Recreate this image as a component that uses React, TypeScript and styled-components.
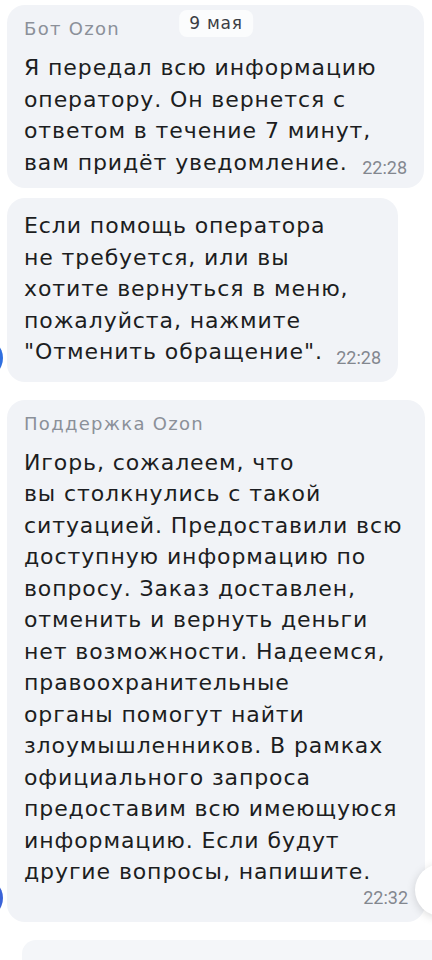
import styled, { createGlobalStyle } from "styled-components";

const GlobalStyle = createGlobalStyle`
  html, body {
    margin: 0;
    padding: 0;
    background: #ffffff;
  }
  body {
    width: 432px;
    height: 960px;
    overflow: hidden;
    font-family: "DejaVu Sans", "Noto Sans", sans-serif;
  }
`;

const ChatScreen = styled.div`
  position: relative;
  width: 432px;
  height: 960px;
  overflow: hidden;
  display: flex;
  flex-direction: column;
  padding: 5px 0 0 7px;
  box-sizing: border-box;
`;

const MessageRow = styled.div<{ $gap: number }>`
  position: relative;
  display: flex;
  flex-shrink: 0;
  margin-bottom: ${({ $gap }) => $gap}px;
`;

const Bubble = styled.div<{ $width: number; $bottom: number }>`
  width: ${({ $width }) => $width}px;
  box-sizing: border-box;
  background: #f1f3f7;
  border-radius: 18px;
  padding: 12px 17px ${({ $bottom }) => $bottom}px 17px;
`;

const Sender = styled.div`
  font-size: 18px;
  line-height: 24px;
  color: #8b9099;
  margin-bottom: 11px;
  letter-spacing: 1.3px;
`;

const Body = styled.div`
  font-size: 22px;
  line-height: 31.5px;
  color: #1c1d21;
  white-space: pre-line;
  letter-spacing: 0.9px;
`;

const LastLine = styled.div`
  display: flex;
  align-items: flex-end;
  justify-content: space-between;
  gap: 12px;
`;

const LineText = styled.span`
  white-space: nowrap;
  flex-shrink: 0;
`;

const Time = styled.span`
  font-family: "Liberation Sans Narrow", Roboto, sans-serif;
  font-size: 18px;
  line-height: 20px;
  letter-spacing: 0;
  color: #83878f;
  white-space: nowrap;
  flex-shrink: 0;
`;

const TimeRow = styled.div`
  display: flex;
  justify-content: flex-end;
`;

const DateChip = styled.div`
  position: absolute;
  top: 10px;
  left: 50%;
  transform: translateX(-50%);
  background: #fbfcfd;
  border-radius: 8px;
  padding: 3px 10px 4px;
  font-size: 17px;
  line-height: 20px;
  font-weight: 500;
  color: #3b3e45;
  letter-spacing: 0.8px;
`;

const Avatar = styled.div<{ $bottom: number; $tint: string }>`
  position: absolute;
  left: -44px;
  bottom: ${({ $bottom }) => $bottom}px;
  width: 40px;
  height: 40px;
  border-radius: 50%;
  background: ${({ $tint }) => $tint};
`;

const ScrollButton = styled.div`
  position: absolute;
  left: 415px;
  top: 864px;
  width: 52px;
  height: 52px;
  border-radius: 50%;
  background: #ffffff;
  box-shadow: 0 2px 10px rgba(0, 0, 0, 0.15);
  display: flex;
  align-items: center;
  padding-left: 17px;
  padding-bottom: 14px;
  box-sizing: border-box;
  color: #9aa0a8;
`;

const NextBubble = styled.div`
  flex-shrink: 0;
  margin-left: 15px;
  height: 40px;
  background: #f4f6f9;
  border-radius: 14px 0 0 0;
`;

export default function App() {
  return (
    <>
      <GlobalStyle />
      <ChatScreen>
        <MessageRow $gap={10}>
          <Bubble $width={417} $bottom={10}>
            <Sender>Бот Ozon</Sender>
            <Body>
              {"Я передал всю информацию\nоператору. Он вернется с\nответом в течение 7 минут,"}
              <LastLine>
                <LineText>вам придёт уведомление.</LineText>
                <Time>22:28</Time>
              </LastLine>
            </Body>
          </Bubble>
        </MessageRow>

        <MessageRow $gap={18}>
          <Bubble $width={391} $bottom={14}>
            <Body>
              {"Если помощь оператора\nне требуется, или вы\nхотите вернуться в меню,\nпожалуйста, нажмите"}
              <LastLine>
                <LineText>"Отменить обращение".</LineText>
                <Time>22:28</Time>
              </LastLine>
            </Body>
          </Bubble>
          <Avatar $bottom={4} $tint="#2f6fe0" />
        </MessageRow>

        <MessageRow $gap={18}>
          <Bubble $width={418} $bottom={14}>
            <Sender>Поддержка Ozon</Sender>
            <Body>
              {
                "Игорь, сожалеем, что\nвы столкнулись с такой\nситуацией. Предоставили всю\nдоступную информацию по\nвопросу. Заказ доставлен,\nотменить и вернуть деньги\nнет возможности. Надеемся,\nправоохранительные\nорганы помогут найти\nзлоумышленников. В рамках\nофициального запроса\nпредоставим всю имеющуюся\nинформацию. Если будут\nдругие вопросы, напишите."
              }
            </Body>
            <TimeRow>
              <Time>22:32</Time>
            </TimeRow>
          </Bubble>
          <Avatar $bottom={4} $tint="#3a63d8" />
        </MessageRow>

        <NextBubble />

        <DateChip>9 мая</DateChip>
        <ScrollButton>
          <svg width="10" height="10" viewBox="0 0 10 10">
            <path d="M1 3 L5 7 L9 3" stroke="currentColor" strokeWidth="1.6" fill="none" />
          </svg>
        </ScrollButton>
      </ChatScreen>
    </>
  );
}
